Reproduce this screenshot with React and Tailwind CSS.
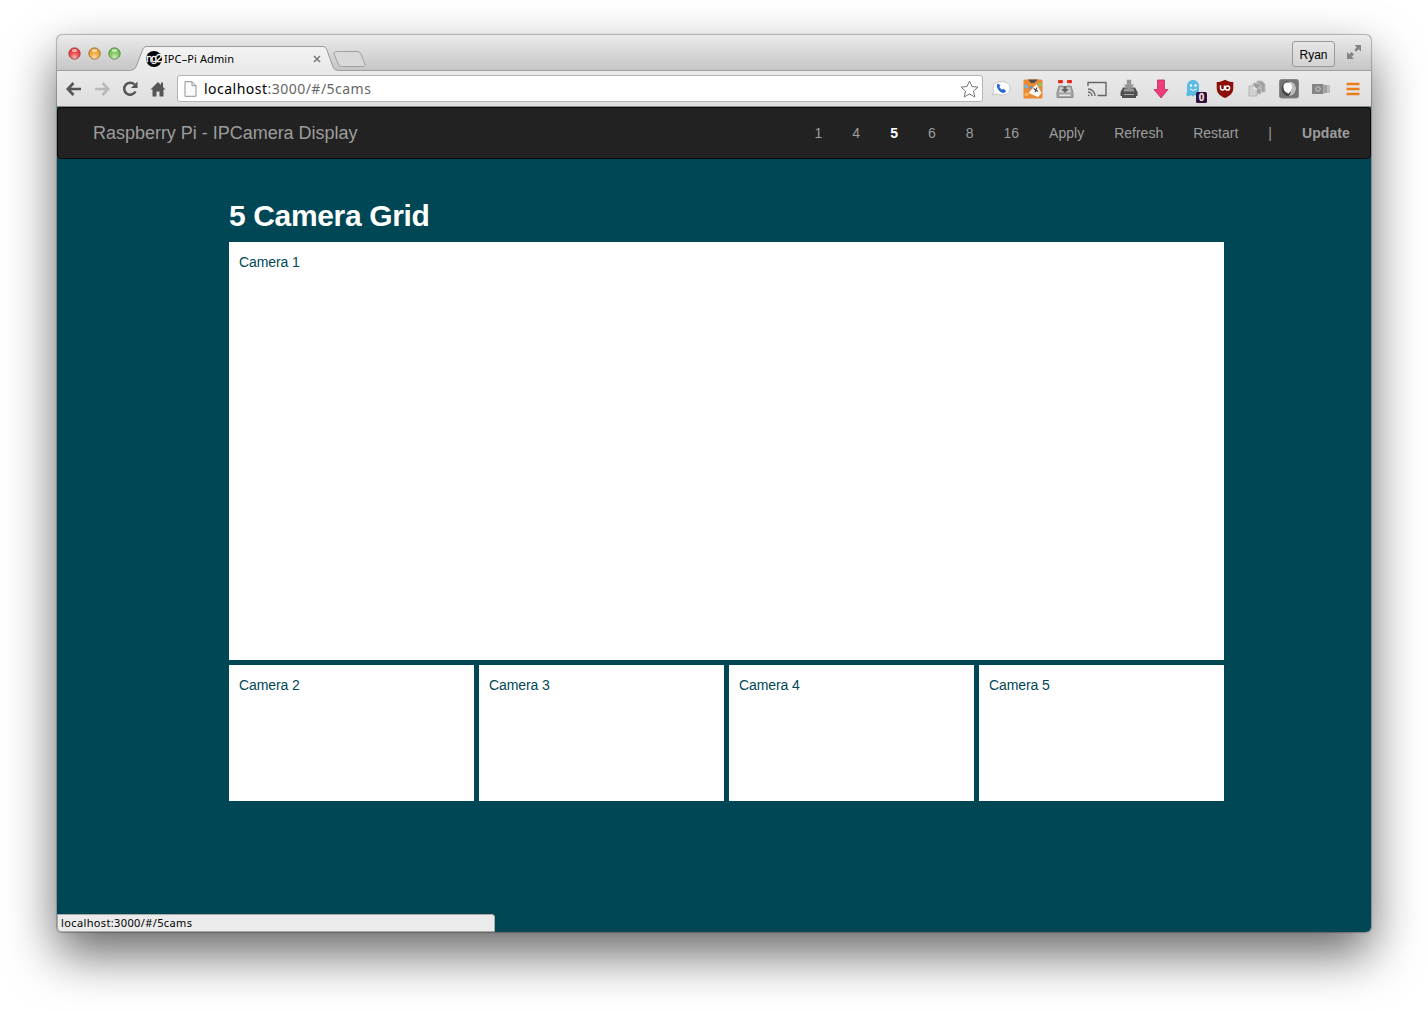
import React from "react";

function Light({ fill, ring }) {
  return (
    <svg width="13" height="13" viewBox="0 0 13 13">
      <defs>
        <radialGradient id={"l" + ring.slice(1)} cx="50%" cy="85%" r="75%">
          <stop offset="0" stopColor="#fff" stopOpacity=".7" />
          <stop offset="1" stopColor={fill} stopOpacity="0" />
        </radialGradient>
      </defs>
      <circle cx="6.5" cy="6.5" r="5.6" fill={fill} stroke={ring} />
      <circle cx="6.5" cy="6.5" r="5.2" fill={"url(#l" + ring.slice(1) + ")"} />
      <ellipse cx="6.5" cy="3.4" rx="2.8" ry="1.5" fill="#fff" opacity=".6" />
    </svg>
  );
}

function TabStrip() {
  return (
    <div className="flex h-[35px] bg-linear-to-b from-[#ebebeb] to-[#c6c6c6] pr-[9px] pl-[11px]">
      <div className="mt-[12px] flex h-[13px] w-[63px] gap-[7px]">
        <Light fill="#e8383b" ring="#9d3436" />
        <Light fill="#eea02c" ring="#9a6a20" />
        <Light fill="#76c252" ring="#4c8335" />
      </div>
      <div className="relative mt-[11px] h-[25px] w-[206px]">
        <svg className="absolute top-0 left-0" width="206" height="25" viewBox="0 0 206 26" preserveAspectRatio="none">
          <defs>
            <linearGradient id="tab" x1="0" y1="0" x2="0" y2="1">
              <stop offset="0" stopColor="#f3f3f3" />
              <stop offset="1" stopColor="#e9e9e9" />
            </linearGradient>
          </defs>
          <path d="M0 25 C3 25 4 23.5 5 21.5 L11.5 4.500 C12.500 1.500 13.500 .5 16.500 .5 H191 C194 .5 195 1.500 196 4.500 L202 21.500 C203 24 204 25 206 25 V26 H0Z" fill="url(#tab)" />
          <path d="M0 25 C3 25 4 23.500 5 21.500 L11.500 4.500 C12.500 1.500 13.500 .5 16.500 .5 H191 C194 .5 195 1.500 196 4.500 L202 21.500 C203 24 204 25 206 25" fill="none" stroke="#969696" />
        </svg>
        <div className="relative flex h-[26px] items-center pl-[15px]">
          <svg width="16" height="16" viewBox="0 0 16 16" className="shrink-0">
            <circle cx="8" cy="8" r="8" fill="#000" />
            <text x="8" y="11" textAnchor="middle" textLength="16" fontSize="11" fill="#fff" stroke="#fff" strokeWidth=".3" fontFamily="Liberation Sans, sans-serif">ng2</text>
          </svg>
          <span className="ml-[2px] w-[149px] text-[11px] tracking-[0.1px] whitespace-nowrap text-black [font-family:'Noto_Sans',sans-serif]">IPC–Pi Admin</span>
          <svg width="8" height="8" viewBox="0 0 8 8" className="shrink-0">
            <path d="M1 1 7 7M7 1 1 7" stroke="#777" strokeWidth="1.500" />
          </svg>
        </div>
      </div>
      <svg width="34" height="18" className="mt-[16px] -ml-[4px]">
        <path d="M3.500 .5H24C26 .5 27.500 1.500 28.200 3.500L31.800 13C32.500 15 31.500 15.500 29.500 15.500H9.500C7 15.500 6 15 5.200 13L1.200 3.500C.6 1.500 1.500 .5 3.500 .5Z" fill="#d9d9d9" stroke="#a0a0a0" />
      </svg>
      <div className="grow" />
      <div className="mt-[6px] flex h-[26px] w-[43px] items-center justify-center rounded-[3px] border border-[#999] bg-linear-to-b from-[#e6e6e6] to-[#d3d3d3] pt-[2px] text-[12px] text-black">Ryan</div>
      <svg width="16" height="16" viewBox="0 0 16 16" className="mt-[9px] ml-[11px] fill-[#858585]">
        <path d="M8.500 1H15V7.500L12.700 5.300 10.300 7.700 8.300 5.700 10.700 3.300Z M1 8 3.300 10.300 5.600 8 8 10.400 5.700 12.700 8 15H1Z" />
      </svg>
    </div>
  );
}

const icons = [
  <svg width="20" height="18" viewBox="0 0 20 18">
    <path d="M10.500 1.500C15.500 1.500 19 4.200 19 8.500S15.500 15 10.500 15C8.500 15 7 14.500 5.700 13.900L1 15 3 11.500C2.200 10.500 2 9.500 2 8.500 2 4.200 5.500 1.500 10.500 1.500Z" fill="#fff" stroke="#c4c4c4" />
    <path d="M7 3.500C4.800 5 6 8.500 8.500 11S13.500 13.500 15.200 11L12.500 8.800 11 9.700C10 9 9 8 8.300 6.800L9.600 5.600Z" fill="#2b65cf" />
  </svg>,
  <svg width="20" height="20" viewBox="0 0 20 20">
    <rect x=".5" y=".5" width="19" height="19" rx="1.500" fill="#ea8835" />
    <path d="M5 .5H15L11 4H8Z" fill="#4b4b4b" />
    <circle cx="3" cy="7.500" r="2" fill="#70b5d5" />
    <circle cx="17" cy="5.500" r="2" fill="#8bc85b" />
    <circle cx="8" cy="8.500" r="1.500" fill="#5b9ac0" />
    <path d="M5.500 14 13.500 5 18.500 14 15 18Z" fill="#fff" />
    <path d="M10.500 9.500 15 12.500M12 13 14 8.500" stroke="#444" strokeWidth="1.200" />
    <circle cx="3.500" cy="15.500" r="2" fill="#f6b94c" />
  </svg>,
  <svg width="18" height="20" viewBox="0 0 18 20">
    <path d="M3 7H15L17 13.500V18.500H1V13.500Z" fill="#a4a5a3" stroke="#8a8b89" />
    <path d="M4 8.500H14L15 13.500H3Z" fill="#d0d0d0" />
    <path d="M7 2.500H11V7H7Z" fill="#e9e9e9" />
    <rect x="2" y="1" width="5" height="3.200" rx="1" fill="#e9271d" />
    <rect x="11" y="1" width="5" height="3.200" rx="1" fill="#e9271d" />
    <path d="M7.500 7H10.500V10H13L9 14 5 10H7.500Z" fill="#666" />
    <path d="M3.500 16.200H14.500" stroke="#e5e5e5" strokeWidth="1.500" />
  </svg>,
  <svg width="20" height="16" viewBox="0 0 20 16" fill="none" stroke="#666" strokeWidth="1.400">
    <path d="M1 5V1.500H19V14.500H10.500M1 8A7 7 0 0 1 8 15M1 11A4 4 0 0 1 5 15" />
    <circle cx="1.700" cy="14.300" r=".9" fill="#666" stroke="none" />
  </svg>,
  <svg width="20" height="20" viewBox="0 0 20 20">
    <path d="M4 8.500H16L18.500 13V17H17V19H3V17H1.500V13Z" fill="#4f4f4f" />
    <path d="M5.500 9.500H14.500L15.500 12.500H4.500Z" fill="#999" />
    <path d="M5 15.500H15" stroke="#aaa" />
    <path d="M7.800 .8H12.200V5.500H15.500L10 11 4.500 5.500H7.800Z" fill="#959595" />
  </svg>,
  <svg width="16" height="20" viewBox="0 0 16 20">
    <path d="M4.500 1H11.500V10.500H15L8 19 1 10.500H4.500Z" fill="#f03b7d" stroke="#b5305f" strokeWidth=".8" />
  </svg>,
  <svg width="22" height="24" viewBox="0 0 22 24" className="mt-[5px] ml-[5px]">
    <path d="M2 13V7.500C2 3.500 4.500 1 8 1S14 3.500 14 7.500V13L15 16 12 17.500 10 16 8 17.500 6 16 4 17.500 1 16Z" fill="#5bbbe4" />
    <circle cx="6" cy="6.500" r="1.200" fill="#fff" /><circle cx="10.500" cy="6.500" r="1.200" fill="#fff" />
    <path d="M5 10Q8.200 13 11.500 10" fill="none" stroke="#fff" />
    <rect x="11" y="13" width="11" height="11" rx="1.500" fill="#34113b" />
    <text x="16.500" y="22" textAnchor="middle" fontSize="10" fontWeight="bold" fill="#fff" fontFamily="Liberation Sans, sans-serif">0</text>
  </svg>,
  <svg width="18" height="20" viewBox="0 0 18 20">
    <path d="M9 .7C12 2.500 14.500 3 17.300 3V9C17.300 14 14 17 9 19 4 17 .7 14 .7 9V3C3.500 3 6 2.500 9 .7Z" fill="#8c1008" />
    <path d="M4.500 6.500V9A2 2 0 0 0 8.500 9V6.500" fill="none" stroke="#fff" strokeWidth="1.500" />
    <circle cx="11.500" cy="9" r="2.100" fill="none" stroke="#fff" strokeWidth="1.500" />
  </svg>,
  <svg width="18" height="18" viewBox="0 0 18 18">
    <path d="M9 1H14L17 4V12H9Z" fill="#a2a2a2" stroke="#bbb" />
    <path d="M5 3H10L13 6V14H5Z" fill="#9c9c9c" stroke="#c8c8c8" />
    <path d="M1 6H6L9 9V16H1Z" fill="#d0d0d0" stroke="#b5b5b5" />
    <path d="M6 6V9H9M10 8H12" stroke="#eee" fill="none" />
  </svg>,
  <svg width="20" height="20" viewBox="0 0 20 20">
    <rect x=".5" y=".5" width="19" height="18.500" rx="2" fill="#747474" stroke="#888" />
    <ellipse cx="10" cy="9.700" rx="7.300" ry="7.500" fill="#474747" />
    <path d="M9 2.500C14 2 17 5 17 9.500S14 17 10 17C13 12 14 7 9 2.500Z" fill="#bdbdbd" />
    <path d="M5 5C7 2.500 11 3 13 6C13.500 10 12 13 9.500 14.500C5 13 3.500 9 5 5Z" fill="#fff" />
  </svg>,
  <svg width="20" height="12" viewBox="0 0 20 12">
    <path d="M1 1H12.500V11H1Z" fill="#858585" /><path d="M12.500 2H16V10H12.500Z" fill="#9f9f9f" /><path d="M16 2H19V10H16Z" fill="#bdbdbd" />
    <circle cx="7" cy="6" r="2.300" fill="#888" stroke="#c8c8c8" />
  </svg>,
  <svg width="14" height="14" viewBox="0 0 14 14">
    <path d="M.5 2H13.500M.5 7H13.500M.5 12H13.500" stroke="#ea7d1d" strokeWidth="2.500" />
  </svg>,
];

function Toolbar() {
  return (
    <div className="flex h-[37px] items-center border-t border-b border-t-[#a0a0a0] border-b-[#8b8b8b] bg-linear-to-b from-[#eaeaea] to-[#dedede]">
      <div className="flex w-[120px] items-center pl-[9px]">
        <svg width="16" height="14" viewBox="0 0 16 14" fill="none" stroke="#555" strokeWidth="2.600"><path d="M7.500 1 1.800 7 7.500 13M2 7H15" /></svg>
        <svg width="16" height="14" viewBox="0 0 16 14" className="ml-[12px]" fill="none" stroke="#b9b9b9" strokeWidth="2.600"><path d="M8.500 1 14.200 7 8.500 13M14 7H1" /></svg>
        <svg width="16" height="16" viewBox="0 0 16 16" className="ml-[12px]"><path d="M12.500 3.500A6 6 0 1 0 13.500 10.500" fill="none" stroke="#555" strokeWidth="2.500" /><path d="M15.500 .5V7H9Z" fill="#555" /></svg>
        <svg width="16" height="16" viewBox="0 0 16 16" className="ml-[12px]" fill="#555"><path d="M8 1 .5 8.500H2.500V15.500H6.500V10.500H9.500V15.500H13.500V8.500H15.500L13 6V1.500H11V4Z" /></svg>
      </div>
      <div className="flex h-[27px] w-[806px] items-center rounded-[3px] border border-[#b4b4b4] bg-white pr-[3px] pl-[6px]">
        <svg width="13" height="16" viewBox="0 0 13 16"><path d="M1 .7H8L12 4.700V15.300H1Z M8 .7V4.700H12" fill="#fafafa" stroke="#929292" /></svg>
        <span className="ml-[7px] grow text-[14px] tracking-[0.48px] whitespace-nowrap text-[#666] [font-family:'Noto_Sans',sans-serif]"><span className="text-black">localhost</span>:3000/#/5cams</span>
        <svg width="19" height="18" viewBox="0 0 19 18"><path d="M9.500 1 12 6.500 18 7.100 13.500 11 14.800 17 9.500 13.900 4.200 17 5.500 11 1 7.100 7 6.500Z" fill="#fff" stroke="#777" strokeLinejoin="round" /></svg>
      </div>
      <div className="ml-[2px] flex items-center">
        {icons.map((icon, i) => (
          <div key={i} className="flex h-[24px] w-[32px] shrink-0 items-center justify-center">{icon}</div>
        ))}
      </div>
    </div>
  );
}

const links = ["1", "4", "5", "6", "8", "16", "Apply", "Refresh", "Restart", "|", "Update"];

function Navbar() {
  return (
    <nav className="flex h-[52px] items-center justify-between rounded-[4px] border border-[#080808] bg-[#222] pr-[5px] pl-[35px] text-[#9d9d9d]">
      <div className="text-[18px] tracking-[-0.02px]">Raspberry Pi - IPCamera Display</div>
      <div className="flex text-[14px]">
        {links.map((l) => (
          <a key={l} className={l === "5" ? "px-[15px] font-bold text-white" : l === "Update" ? "pr-[15px] pl-[15px] font-bold tracking-[0.1px]" : "px-[15px]"}>{l}</a>
        ))}
      </div>
    </nav>
  );
}

function Camera({ n }) {
  return <div className="bg-white p-[10px] text-[14px] leading-[20px] tracking-[-0.1px]">Camera {n}</div>;
}

export default function App() {
  return (
    <div className="h-[1011px] overflow-hidden bg-white pt-[35px] pl-[57px] [font-family:'Liberation_Sans',sans-serif]">
      <div className="relative h-[897px] w-[1314px] rounded-[5px] shadow-[0_22px_50px_rgba(0,0,0,0.6),0_0_1px_1px_rgba(0,0,0,0.25)]">
        <div className="h-full overflow-hidden rounded-[5px] bg-[#004755]">
          <TabStrip />
          <Toolbar />
          <Navbar />
          <main className="ml-[172px] w-[995px] pt-[36px] text-[#004755]">
            <h1 className="h-[47px] text-[30px] leading-[42px] font-bold tracking-[-0.36px] text-white">5 Camera Grid</h1>
            <div className="grid grid-cols-4 grid-rows-[418px_136px] gap-[5px]">
              <div className="col-span-4 grid"><Camera n={1} /></div>
              <Camera n={2} />
              <Camera n={3} />
              <Camera n={4} />
              <Camera n={5} />
            </div>
          </main>
        </div>
        <div className="absolute bottom-0 left-0 flex h-[18px] w-[438px] items-center rounded-tr-[3px] rounded-bl-[4px] border border-[#aaa] bg-[#ebebeb] pl-[3px] text-[11px] tracking-[0.37px] text-black [font-family:'Noto_Sans',sans-serif]">localhost:3000/#/5cams</div>
      </div>
    </div>
  );
}
